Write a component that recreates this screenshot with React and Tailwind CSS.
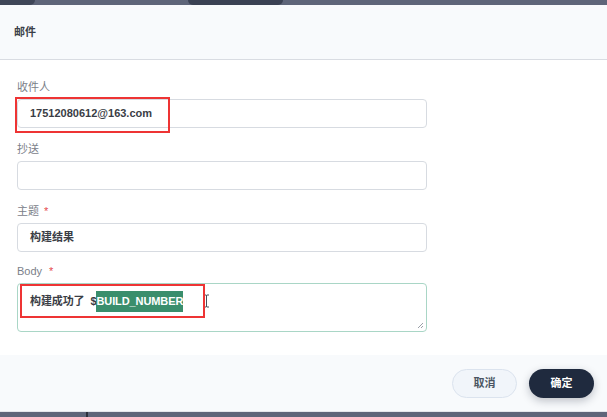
export default function App() {
    return (
        <div className="flex h-[417px] w-[607px] flex-col overflow-hidden bg-[#5e6579] font-['Liberation_Sans','Noto_Sans_CJK_SC',sans-serif]">
            {/* page behind the dialog */}
            <div className="flex h-[5px] shrink-0">
                <div className="h-full w-[35px] rounded-br-md bg-[#3f4658]" />
                <div className="ml-[153px] h-full w-[95px] rounded-b-md bg-[#3a4153]" />
            </div>

            <div className="flex flex-1 flex-col bg-white">
                <div className="flex h-[55px] shrink-0 items-center border-b border-[#d9dce2] bg-[#f8fafc] px-[14px]">
                    <h3 className="text-[11px] font-bold text-[#3b3f48]">邮件</h3>
                </div>

                <div className="flex-1 px-[17px] pt-[20px]">
                    <label className="block h-[14px] text-[11px] leading-[14px] text-[#7b8089]">收件人</label>
                    <div className="relative mt-[5px] w-[410px]">
                        <div className="flex h-[29px] items-center rounded-[4px] border border-[#d7dbe1] bg-white pl-[12px] text-[11px] font-bold text-[#3a3d45]">
                            17512080612@163.com
                        </div>
                        <div className="absolute left-[-2px] top-[-2px] h-[36px] w-[155px] border-[2.5px] border-[#ee3434]" />
                    </div>

                    <label className="mt-[14px] block h-[14px] text-[11px] leading-[14px] text-[#7b8089]">抄送</label>
                    <div className="mt-[5px] h-[29px] w-[410px] rounded-[4px] border border-[#d7dbe1] bg-white" />

                    <label className="mt-[14px] block h-[14px] text-[11px] leading-[14px] text-[#7b8089]">
                        主题<span className="ml-[5px] text-[#e5484d]">*</span>
                    </label>
                    <div className="mt-[5px] flex h-[29px] w-[410px] items-center rounded-[4px] border border-[#d7dbe1] bg-white pl-[12px] text-[11px] font-bold text-[#3a3d45]">
                        构建结果
                    </div>

                    <label className="mt-[12px] block h-[14px] text-[11px] leading-[14px] text-[#7b8089]">
                        Body<span className="ml-[7px] text-[#e5484d]">*</span>
                    </label>
                    <div className="relative mt-[5px] h-[49px] w-[410px] rounded-[4px] border border-[#a9d6c6] bg-white">
                        <div className="flex items-center pl-[12px] pt-[7px] text-[11px] font-bold tracking-[-0.1px] text-[#3a3d45]">
                            <span>构建成功了&nbsp;&nbsp;$</span>
                            <span className="bg-[#3a8e6c] py-[2px] text-white">BUILD_NUMBER</span>
                            <svg className="ml-[20px]" width="7" height="14" viewBox="0 0 7 14">
                                <path d="M1 1 H3 Q3.5 1 3.5 2 V12 Q3.5 13 3 13 H1 M6 1 H4 Q3.5 1 3.5 2 M3.5 12 Q3.5 13 4 13 H6" stroke="#4a4f58" strokeWidth="1" fill="none" />
                            </svg>
                        </div>
                        <svg className="absolute bottom-[2px] right-[2px]" width="8" height="8" viewBox="0 0 8 8">
                            <path d="M7 2 L2 7 M7 5 L5 7" stroke="#9aa0a8" strokeWidth="1" fill="none" />
                        </svg>
                        <div className="absolute left-[2px] top-[0px] h-[34px] w-[185px] border-[2.5px] border-[#ee3434]" />
                    </div>
                </div>

                <div className="flex h-[57px] shrink-0 items-center justify-end gap-[12px] border-b border-[#e3e6ea] bg-[#f8fafc] pr-[13px]">
                    <button className="h-[29px] w-[65px] rounded-full border border-[#dbe3ee] bg-[#f1f5fa] text-[11px] font-semibold text-[#4b5563]">
                        取消
                    </button>
                    <button className="h-[29px] w-[65px] rounded-full bg-[#1f2a3e] text-[11px] font-semibold text-white shadow-[0_3px_8px_rgba(15,23,42,0.25)]">
                        确定
                    </button>
                </div>
            </div>

            <div className="flex h-[5px] shrink-0">
                <div className="ml-[86px] h-full w-[2px] bg-[#2b303b]" />
            </div>
        </div>
    );
}
